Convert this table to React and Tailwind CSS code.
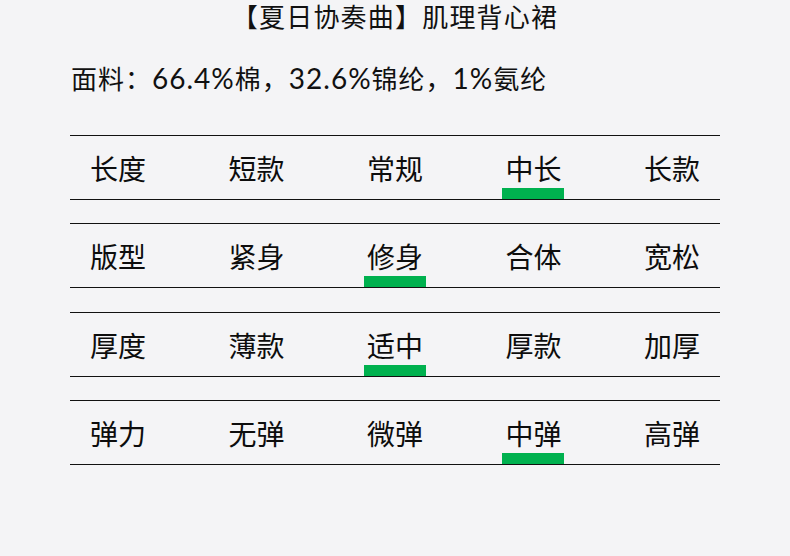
const rows = [
  { label: '长度', options: ['短款', '常规', '中长', '长款'], active: 2, gap: 'mt-0' },
  { label: '版型', options: ['紧身', '修身', '合体', '宽松'], active: 1, gap: 'mt-[23px]' },
  { label: '厚度', options: ['薄款', '适中', '厚款', '加厚'], active: 1, gap: 'mt-[24px]' },
  { label: '弹力', options: ['无弹', '微弹', '中弹', '高弹'], active: 2, gap: 'mt-[23px]' },
];

const Cell = ({ text, active }) => (
  <div className="relative flex items-center self-stretch">
    <span className="text-[28px] leading-none text-[#0d0d0d]">{text}</span>
    {active && <div className="absolute bottom-0 -left-[3px] -right-[3px] h-[11px] bg-[#00b14f]" />}
  </div>
);

// latin bits of the fabric line sit in a wider font
const Num = ({ children }) => (
  <span className="text-[28px] tracking-[1px]" style={{ fontFamily: 'Lato, sans-serif' }}>
    {children}
  </span>
);

export default function App() {
  return (
    <div
      className="w-[790px] h-[556px] bg-[#f4f4f6] text-[#111]"
      style={{ fontFamily: '"Noto Sans CJK SC", sans-serif' }}
    >
      <div className="w-[650px] mx-auto">
        <h1 className="pt-px h-[31px] text-center text-[26px] leading-[30px] tracking-[1.2px] font-normal">
          【夏日协奏曲】肌理背心裙
        </h1>
        <p className="mt-[32px] pl-px text-[26px] leading-[30px] tracking-[1px]">
          面料：<Num>66.4%</Num>棉，<Num>32.6%</Num>锦纶，<Num>1%</Num>氨纶
        </p>

        <div className="mt-[42px] flex flex-col">
          {rows.map((row) => (
            <div
              key={row.label}
              className={`${row.gap} h-[65px] border-y border-[#111] flex justify-between px-5`}
            >
              <Cell text={row.label} />
              {row.options.map((opt, i) => (
                <Cell key={opt} text={opt} active={i === row.active} />
              ))}
            </div>
          ))}
        </div>
      </div>
    </div>
  );
}
